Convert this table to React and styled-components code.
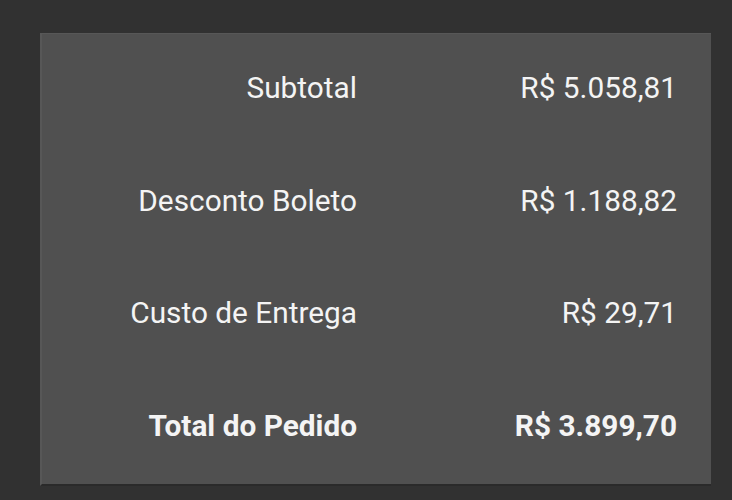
import styled, { createGlobalStyle } from "styled-components";

const GlobalStyle = createGlobalStyle`
  body {
    margin: 0;
    background: #313131;
    font-family: Roboto, "Liberation Sans", sans-serif;
  }
`;

const rows = [
  { label: "Subtotal", value: "R$ 5.058,81" },
  { label: "Desconto Boleto", value: "R$ 1.188,82" },
  { label: "Custo de Entrega", value: "R$ 29,71" },
  { label: "Total do Pedido", value: "R$ 3.899,70", total: true },
];

const App = () => (
  <>
    <GlobalStyle />
    <Page>
      <Summary>
        {rows.map((row) => (
          <Row key={row.label}>
            <Label $total={row.total}>{row.label}</Label>
            <Value $total={row.total}>{row.value}</Value>
          </Row>
        ))}
      </Summary>
    </Page>
  </>
);

export default App;

const Page = styled.div`
  width: 732px;
  height: 500px;
  padding: 33px 0 0 40px;
  box-sizing: border-box;
  background: #313131;
`;

const Summary = styled.div`
  width: 671px;
  height: 453px;
  box-sizing: border-box;
  background: #505050;
  border-left: 2px solid #575757;
  border-top: 1px solid #575757;
  border-bottom: 2px solid #2a2a2a;
  display: grid;
  grid-template-rows: repeat(4, 1fr);
  padding-right: 34px;
`;

const Row = styled.div`
  display: grid;
  grid-template-columns: 315px 1fr;
  align-items: center;
  padding-bottom: 5px;
`;

const Label = styled.div`
  text-align: right;
  font-size: 29.8px;
  font-weight: ${(p) => (p.$total ? 700 : 400)};
  color: #f4f4f4;
`;

const Value = styled.div`
  text-align: right;
  font-size: 29.8px;
  font-weight: ${(p) => (p.$total ? 700 : 400)};
  color: #f4f4f4;
`;
